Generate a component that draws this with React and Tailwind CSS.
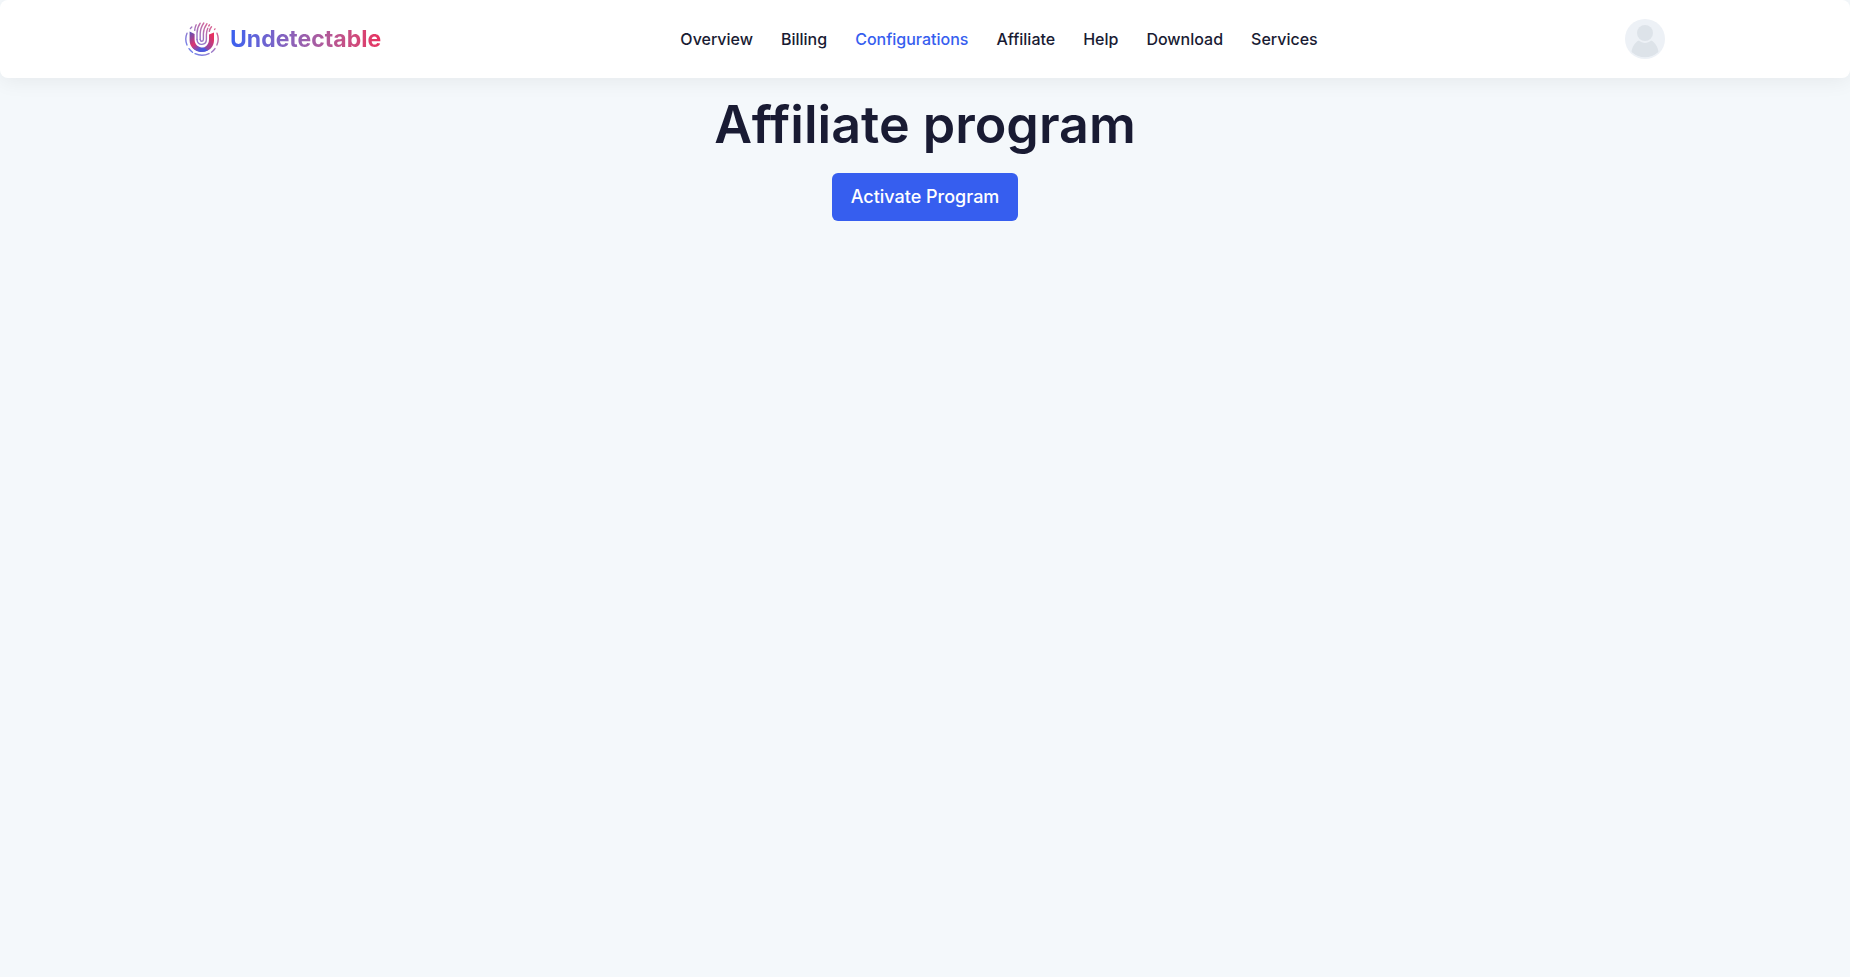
import React from "react";

const links = ["Overview", "Billing", "Configurations", "Affiliate", "Help", "Download", "Services"];

function LogoMark() {
  return (
    <svg viewBox="0 0 34 34" className="size-[34px]" fill="none" aria-hidden="true">
      <defs>
        <linearGradient id="body" x1="4" y1="28" x2="27" y2="13" gradientUnits="userSpaceOnUse">
          <stop offset="0" stopColor="#3760f5" />
          <stop offset="0.4" stopColor="#6a52c4" />
          <stop offset="1" stopColor="#e8305f" />
        </linearGradient>
        <linearGradient id="arm" x1="5" y1="10" x2="22" y2="30" gradientUnits="userSpaceOnUse">
          <stop offset="0" stopColor="#5c50b8" />
          <stop offset="0.45" stopColor="#dc3670" />
          <stop offset="0.75" stopColor="#5058d8" />
          <stop offset="1" stopColor="#3e5ce8" />
        </linearGradient>
        <linearGradient id="line" x1="2" y1="32" x2="31" y2="2" gradientUnits="userSpaceOnUse">
          <stop offset="0" stopColor="#6685f5" />
          <stop offset="0.55" stopColor="#a273bd" />
          <stop offset="1" stopColor="#ed5f85" />
        </linearGradient>
      </defs>
      <path d="M29 10.5V18.5C29 25 23.5 30 17 30C12 30 8 27.5 6.5 24C10 27 15 27.4 19 25.4C22.5 23.7 24 21 24 17.5V12.5Z" fill="url(#body)" />
      <path d="M4.6 9.5L9.6 12V17.5C9.6 22.6 13.5 25.8 18.5 25.6L23 28.5C13.5 32.5 4.6 26.5 4.6 18.5Z" fill="url(#arm)" />
      <g stroke="url(#line)" strokeWidth="1.4" strokeLinecap="round">
        <path d="M5.4 6.4L6.8 5" />
        <path d="M9.7 8.4C9.8 6.4 10.3 4.6 11.2 2.8" />
        <path d="M12 17.5V11.5C12 8 12.9 4.5 15.2 1.2" />
        <path d="M12 17.5C12.2 20.8 14.2 22.6 16.9 22.4C19.9 22.1 21.4 20 21.4 17.2V12.4C21.4 10.2 21.9 8.2 22.8 6.2" />
        <path d="M15.2 17.4V12C15.2 7.8 16.4 4.4 18.8 1" />
        <path d="M15.2 17.4C15.4 20 18.4 19.8 18.4 17.2V11.6C18.4 8 19.8 4.8 22 1.7" />
        <path d="M23.7 4L24.5 2.8" />
        <path d="M24.3 9.4C24.6 7.6 25.4 6 26.5 4.7" />
        <path d="M29.6 7.4L30 6.9" />
        <path d="M32 11.2C33.6 15 33.6 19.2 31.9 23" />
        <path d="M2 11.2C.4 15 .4 19.2 2 23" />
        <path d="M4 26.7C5 28.2 6.1 29.3 7.5 30.3" />
        <path d="M10 31.7C14.5 33.7 19.8 33.6 24 31.6" />
        <path d="M26.5 30.2C28 29.1 29.1 28 30 26.6" />
      </g>
    </svg>
  );
}

function Avatar() {
  return (
    <svg viewBox="0 0 40 40" className="size-10" aria-hidden="true">
      <defs>
        <clipPath id="disc"><circle cx="20" cy="20" r="18.8" /></clipPath>
      </defs>
      <circle cx="20" cy="20" r="20" fill="#edf1f6" />
      <g fill="#dde3e9" clipPath="url(#disc)">
        <circle cx="20" cy="14" r="8" />
        <path d="M6.5 33C7 28 9.8 23.5 13.8 21.5C17.5 24.8 22.5 24.8 26.2 21.5C30.2 23.5 33 28 33.5 33C26 40 14 40 6.5 33Z" />
      </g>
    </svg>
  );
}

export default function App() {
  return (
    <div className="min-h-screen bg-[#f4f8fb] font-['Inter',sans-serif] text-[#191b33]">
      <header className="rounded-lg bg-white px-[10%] shadow-[0_4px_20px_rgba(0,0,0,0.06)]">
        <div className="flex h-[78px] items-center justify-between">
          <a href="#" className="flex items-center gap-[11px]">
            <LogoMark />
            <span className="bg-linear-to-r from-[#3760f0] to-[#e8305f] bg-clip-text text-[23px] font-bold text-transparent">
              Undetectable
            </span>
          </a>
          <nav className="flex items-center gap-7 pr-2 text-base font-medium">
            {links.map((name) => (
              <a key={name} href="#" className={name === "Configurations" ? "text-[#365eef]" : ""}>
                {name}
              </a>
            ))}
          </nav>
          <button type="button" aria-label="Account" className="rounded-full">
            <Avatar />
          </button>
        </div>
      </header>
      <main className="flex flex-col items-center gap-[18px] pt-4">
        <h1 className="text-[52px] leading-[61px] font-semibold">Affiliate program</h1>
        <button type="button" className="h-12 rounded-md bg-[#365eef] px-[19px] text-lg font-medium text-white">
          Activate Program
        </button>
      </main>
    </div>
  );
}
